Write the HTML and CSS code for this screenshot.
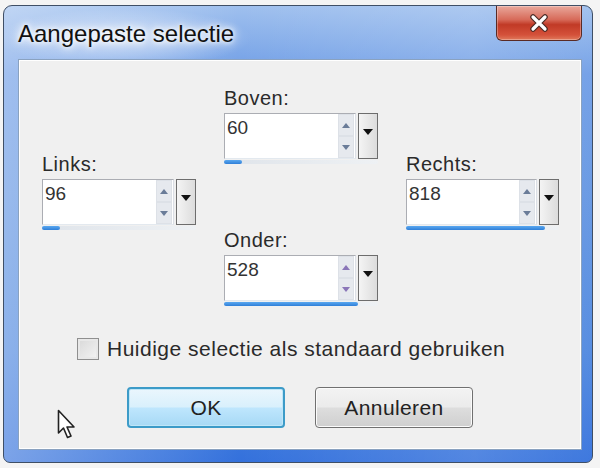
FILE: index.html
```html
<!DOCTYPE html>
<html lang="nl">
<head>
  <meta charset="UTF-8" />
  <title>Aangepaste selectie</title>
  <link rel="stylesheet" href="styles.css">
</head>
<body>
  <div class="window">
    <div class="titlebar">
      <span class="title">Aangepaste selectie</span>
      <button class="close" aria-label="Sluiten">
        <svg width="20" height="18" viewBox="0 0 20 18">
          <path d="M4 3 L16 15 M16 3 L4 15" stroke="#4a2a24" stroke-width="5.5" stroke-linecap="round"/>
          <path d="M4 3 L16 15 M16 3 L4 15" stroke="#fff" stroke-width="3.2" stroke-linecap="round"/>
        </svg>
      </button>
    </div>

    <div class="client">
      <div class="cross">
        <!-- Links -->
        <div class="field side left">
          <label>Links:</label>
          <div class="spin">
            <div class="input">
              <span class="value">96</span>
              <div class="arrows">
                <span class="up"></span>
                <span class="down"></span>
              </div>
            </div>
            <div class="drop"><span></span></div>
          </div>
          <div class="bar"><div class="fill" style="width: 12%"></div></div>
        </div>

        <!-- Boven -->
        <div class="field top">
          <label>Boven:</label>
          <div class="spin">
            <div class="input">
              <span class="value">60</span>
              <div class="arrows">
                <span class="up"></span>
                <span class="down"></span>
              </div>
            </div>
            <div class="drop"><span></span></div>
          </div>
          <div class="bar"><div class="fill" style="width: 12%"></div></div>
        </div>

        <!-- Onder -->
        <div class="field bottom">
          <label>Onder:</label>
          <div class="spin">
            <div class="input">
              <span class="value">528</span>
              <div class="arrows">
                <span class="up"></span>
                <span class="down"></span>
              </div>
            </div>
            <div class="drop"><span></span></div>
          </div>
          <div class="bar"><div class="fill" style="width: 87%"></div></div>
        </div>

        <!-- Rechts -->
        <div class="field side right">
          <label>Rechts:</label>
          <div class="spin">
            <div class="input">
              <span class="value">818</span>
              <div class="arrows">
                <span class="up"></span>
                <span class="down"></span>
              </div>
            </div>
            <div class="drop"><span></span></div>
          </div>
          <div class="bar"><div class="fill" style="width: 91%"></div></div>
        </div>
      </div>

      <div class="option">
        <span class="checkbox"></span>
        <span>Huidige selectie als standaard gebruiken</span>
      </div>

      <div class="buttons">
        <button class="btn default">OK</button>
        <button class="btn">Annuleren</button>
      </div>
    </div>
  </div>

  <svg class="cursor" width="22" height="32" viewBox="0 0 22 32">
    <path d="M1.5 1.5 L1.5 24 L6.5 19 L10.5 28.5 L14 27 L10 18 L17 18 Z" fill="#fff" stroke="#222" stroke-width="1.6" stroke-linejoin="round"/>
  </svg>
</body>
</html>
```

FILE: styles.css
```css
body {
  margin: 0;
  background: #f4f4f4;
  font-family: "Liberation Sans", Arial, sans-serif;
  color: #222;
}

.window {
  margin: 5px 7px 5px 3px;
  height: 456px;
  border: 1px solid #3f4f66;
  border-radius: 9px 9px 7px 7px;
  background:
    radial-gradient(ellipse 170px 40px at 120px 32px, rgba(255,255,255,0.55), rgba(255,255,255,0) 75%),
    linear-gradient(to right, rgba(255,255,255,0.35) 0%, rgba(255,255,255,0) 40%, rgba(255,255,255,0.15) 80%, rgba(255,255,255,0.05) 100%),
    linear-gradient(to bottom, #9fc0ee 0%, #6f9de6 15%, #6496e2 40%, #4f88df 75%, #3471dc 100%);
  display: flex;
  flex-direction: column;
  overflow: hidden;
}

.titlebar {
  height: 53px;
  display: flex;
  align-items: flex-start;
  padding-left: 14px;
}

.title {
  align-self: center;
  margin-top: 2px;
  font-size: 24px;
  color: #111;
  text-shadow: 0 0 8px #fff, 0 0 12px #fff, 0 0 4px #fff;
}

.close {
  margin-left: auto;
  margin-right: 10px;
  width: 86px;
  height: 35px;
  border: 1px solid #5a2a24;
  border-top: none;
  border-radius: 0 0 6px 6px;
  background: linear-gradient(to bottom, #e9a89c 0%, #d76a59 40%, #c13a26 55%, #d4513a 85%, #e07a5c 100%);
  display: flex;
  align-items: center;
  justify-content: center;
  padding: 0;
  box-shadow: inset 0 0 0 1px rgba(255,255,255,0.3);
}

.client {
  flex: 1;
  margin: 0 10px 12px 14px;
  background: #f0f0f0;
  border: 1px solid #8aa2c0;
  box-shadow: inset 0 0 0 1px #fff;
}

.cross {
  display: grid;
  grid-template-columns: 154px 154px 153px;
  grid-template-rows: auto auto;
  column-gap: 28px;
  row-gap: 64px;
  padding: 26px 0 0 23px;
}

.field.left { grid-column: 1; grid-row: 1 / 3; }
.field.top { grid-column: 2; grid-row: 1; }
.field.bottom { grid-column: 2; grid-row: 2; }
.field.right { grid-column: 3; grid-row: 1 / 3; }

.field.side {
  align-self: center;
  margin-bottom: 10px;
}

.field label {
  display: block;
  font-size: 20px;
  letter-spacing: 0.5px;
  line-height: 24px;
  margin-bottom: 3px;
  color: #2a2a2a;
}

.spin {
  display: flex;
  height: 46px;
}

.input {
  flex: 1;
  display: flex;
  background: #fff;
  border: 1px solid #abadb3;
  border-right-color: #dbdfe6;
  border-bottom-color: #e3e9ef;
}

.value {
  flex: 1;
  font-size: 19px;
  line-height: 22px;
  padding: 3px 2px;
  color: #333;
}

.arrows {
  width: 16px;
  margin-right: 1px;
  display: flex;
  flex-direction: column;
  background: #e6e9ee;
}

.arrows span {
  flex: 1;
  display: flex;
  align-items: center;
  justify-content: center;
  border: 1px solid #dde1e7;
}

.arrows span::before {
  content: "";
  border-left: 4px solid transparent;
  border-right: 4px solid transparent;
}

.arrows .up::before { border-bottom: 5px solid #6a7c98; }
.arrows .down::before { border-top: 5px solid #6a7c98; }

.bottom .arrows .up::before,
.bottom .arrows .down::before { border-bottom-color: #8a76b8; border-top-color: #8a76b8; }

.drop {
  width: 20px;
  margin-left: 2px;
  border: 1px solid #6d6d6d;
  background: linear-gradient(to right, #f4f4f4, #dcdcdc);
  display: flex;
  justify-content: center;
  padding-top: 15px;
  box-sizing: border-box;
}

.drop span {
  width: 0;
  height: 0;
  border-left: 5px solid transparent;
  border-right: 5px solid transparent;
  border-top: 6px solid #111;
}

.bar {
  height: 4px;
  margin-top: 1px;
  background: linear-gradient(to right, #dfe4ea, #eef1f4);
  border-radius: 2px;
}

.fill {
  height: 100%;
  background: linear-gradient(to bottom, #5aa8f0, #2f7fd8);
  border-radius: 2px;
}

.option {
  display: flex;
  align-items: center;
  gap: 8px;
  margin: 31px 0 0 58px;
  font-size: 21px;
  letter-spacing: 0.5px;
  color: #2a2a2a;
}

.checkbox {
  width: 20px;
  height: 20px;
  border: 1px solid #8f8f8f;
  background: linear-gradient(135deg, #d8d8d8, #f4f4f4);
  box-shadow: inset 0 0 0 2px #e8e8e8;
}

.buttons {
  display: flex;
  gap: 30px;
  margin: 26px 0 0 108px;
}

.btn {
  width: 158px;
  height: 41px;
  font-family: "Liberation Sans", Arial, sans-serif;
  font-size: 21px;
  letter-spacing: 0.4px;
  color: #222;
  border: 1px solid #707070;
  border-radius: 4px;
  background: linear-gradient(to bottom, #f3f3f3 0%, #ebebeb 48%, #dddddd 52%, #cfcfcf 100%);
  box-shadow: inset 0 0 0 1px #fbfbfb;
}

.btn.default {
  border: 2px solid #3c9bc8;
  background: linear-gradient(to bottom, #eaf6fd 0%, #d9f0fc 48%, #bee6fd 52%, #a7d9f5 100%);
  box-shadow: inset 0 0 0 1px #bfe6f8;
}

.cursor {
  position: absolute;
  left: 57px;
  top: 409px;
}
```
